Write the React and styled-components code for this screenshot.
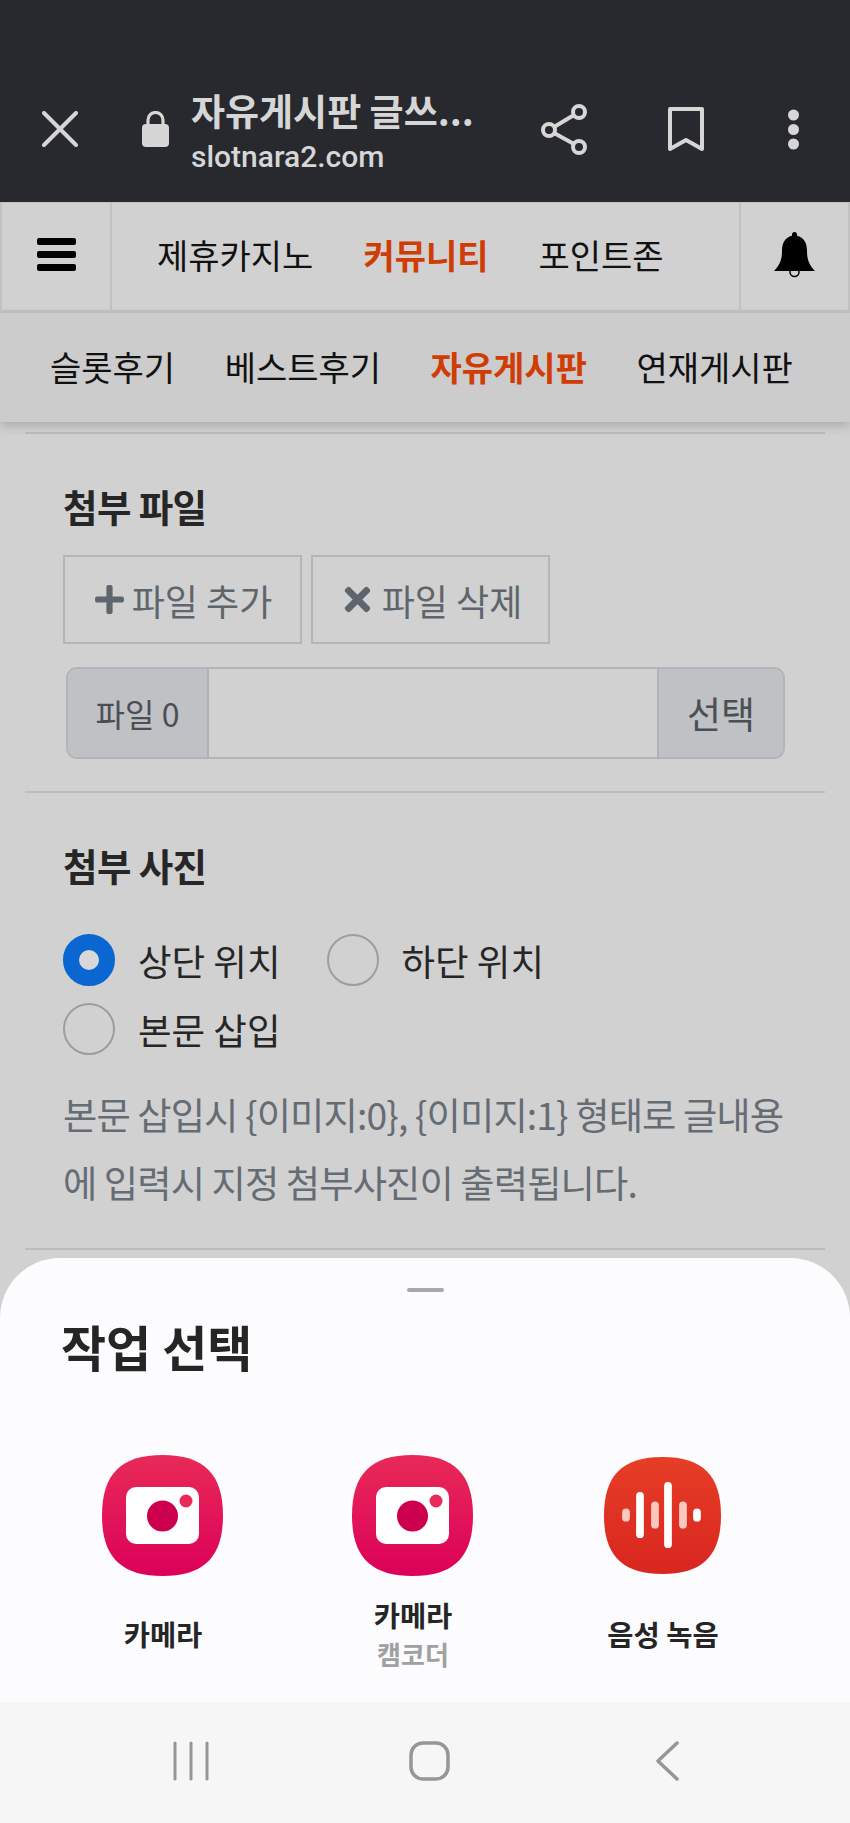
import React from "react"
import styled, { createGlobalStyle } from "styled-components"
import { FaPlus, FaTimes } from "react-icons/fa"

const GlobalStyle = createGlobalStyle`
  html, body {
    margin: 0;
    padding: 0;
    background: #d1d1d1;
    overflow: hidden;
  }
  * { box-sizing: border-box; }
  body {
    font-family: "Noto Sans CJK KR", "Noto Sans", sans-serif;
  }
`

const Screen = styled.div`
  width: 850px;
  height: 1823px;
  display: flex;
  flex-direction: column;
  overflow: hidden;
`

const TitleBar = styled.header`
  height: 202px;
  flex: none;
  background: #27292e;
  color: #d6d6d6;
  display: flex;
  align-items: flex-end;
  padding: 0 0 30px 42px;
`

const BarIcon = styled.svg`
  display: block;
  flex: none;
  margin-bottom: ${p => p.$mb || 0}px;
  margin-left: ${p => p.$ml || 0}px;
`

const TitleBlock = styled.div`
  width: 320px;
  margin: 0 0 -3px 22px;
`

const PageTitle = styled.div`
  font-size: 37px;
  font-weight: 700;
  line-height: 44px;
  white-space: nowrap;
`

const Domain = styled.div`
  font-family: Roboto, "Liberation Sans", sans-serif;
  font-weight: 500;
  font-size: 30px;
  line-height: 36px;
  margin-top: 7px;
`

const MainNav = styled.nav`
  height: 111px;
  flex: none;
  background: #d1d1d1;
  border: 2px solid #c2c2c2;
  border-bottom-width: 3px;
  border-top-width: 1px;
  display: flex;
`

const NavCell = styled.div`
  width: ${p => p.$w}px;
  flex: none;
  display: flex;
  align-items: center;
  justify-content: center;
  padding-bottom: 4px;
  border-left: ${p => (p.$divider === "left" ? "2px solid #c2c2c2" : "0")};
  border-right: ${p => (p.$divider === "right" ? "2px solid #c2c2c2" : "0")};
`

const NavItems = styled.div`
  flex: 1;
  display: flex;
  align-items: center;
  gap: ${p => p.$gap}px;
  padding-left: ${p => p.$left}px;
  padding-bottom: ${p => p.$bottom || 0}px;
`

const NavItem = styled.a`
  font-size: 34px;
  line-height: 44px;
  white-space: nowrap;
  color: ${p => (p.$active ? "#d03c05" : "#111")};
  font-weight: ${p => (p.$active ? 700 : 400)};
`

const SubNav = styled.nav`
  height: 109px;
  flex: none;
  display: flex;
  background: #cccccc;
  box-shadow: 0 4px 10px rgba(0, 0, 0, 0.18);
  position: relative;
  z-index: 1;
`

const Content = styled.main`
  flex: 1;
  min-height: 0;
  padding: 10px 25px 0;
  background: #d1d1d1;
`

const Section = styled.section`
  border-top: 2px solid #bcbcbc;
  padding: 0 38px 32px;
`

const Heading = styled.h3`
  margin: 52px 0 0;
  font-size: 37.5px;
  line-height: 40px;
  font-weight: 700;
  letter-spacing: -0.6px;
  color: #262626;
`

const ButtonRow = styled.div`
  display: flex;
  gap: 9px;
  margin-top: 29px;
`

const FileButton = styled.button`
  width: 239px;
  height: 89px;
  padding: 0;
  background: transparent;
  border: 2.5px solid #b6b6b6;
  border-radius: 0;
  color: #5f656c;
  font: inherit;
  font-size: 36px;
  display: flex;
  align-items: center;
  justify-content: center;
  gap: 6px;
`

const PlusIcon = styled(FaPlus)`
  font-size: 33px;
`

const CrossIcon = styled(FaTimes)`
  font-size: 37px;
`

const FileGroup = styled.div`
  margin: 23px 0 0 3px;
  width: 719px;
  height: 92px;
  display: flex;
  border: 2.5px solid #b1b4b8;
  border-radius: 11px;
  overflow: hidden;
`

const GroupAddon = styled.div`
  width: ${p => p.$w}px;
  flex: none;
  background: #bfc1c4;
  display: flex;
  align-items: center;
  justify-content: center;
  color: #4a4f55;
  font-size: ${p => p.$size}px;
  border-left: ${p => (p.$side === "right" ? "2px solid #aeb1b5" : "0")};
  border-right: ${p => (p.$side === "left" ? "2px solid #aeb1b5" : "0")};
`

const GroupInput = styled.div`
  flex: 1;
  background: #d1d1d1;
`

const RadioGroup = styled.div`
  display: flex;
  flex-wrap: wrap;
  max-width: 600px;
  gap: 17px 46px;
  margin-top: 49px;
`

const RadioItem = styled.label`
  display: flex;
  align-items: center;
  gap: 23px;
  height: 52px;
  font-size: 36.5px;
  color: #262626;
`

const RadioDot = styled.span`
  width: 52px;
  height: 52px;
  flex: none;
  border-radius: 50%;
  background: ${p => (p.$checked ? "#d8d8d8" : "transparent")};
  border: ${p => (p.$checked ? "16px solid #0a66d0" : "2px solid #9a9ea4")};
`

const HelpText = styled.p`
  margin: 25px 0 0;
  font-size: 37.3px;
  line-height: 68px;
  letter-spacing: -0.9px;
  color: #666c74;
  white-space: nowrap;
`

const Sheet = styled.div`
  flex: none;
  height: 444px;
  background: #fcfcff;
  border-radius: 60px 60px 0 0;
  display: flex;
  flex-direction: column;
  position: relative;
  z-index: 2;
`

const Handle = styled.div`
  width: 37px;
  height: 4px;
  background: #a8a8a8;
  border-radius: 2px;
  margin: 30px 0 0 407px;
`

const SheetTitle = styled.h2`
  margin: 21px 0 0 61px;
  font-size: 49px;
  line-height: 66px;
  font-weight: 700;
  color: #252525;
`

const AppGrid = styled.div`
  display: grid;
  grid-template-columns: repeat(3, 250px);
  padding-left: 37px;
  margin-top: 76px;
`

const AppCell = styled.div`
  display: flex;
  flex-direction: column;
  align-items: center;
`

const IconSlot = styled.div`
  height: 121px;
  display: flex;
  align-items: center;
`

const LabelArea = styled.div`
  height: 115px;
  display: flex;
  flex-direction: column;
  align-items: center;
  justify-content: center;
  padding-left: 2px;
`

const AppName = styled.div`
  font-size: 28.5px;
  line-height: 39px;
  font-weight: 700;
  color: #252525;
`

const AppSub = styled.div`
  font-size: 26px;
  line-height: 39px;
  font-weight: 700;
  color: #a0a0a0;
`

const BottomBar = styled.div`
  height: 121px;
  flex: none;
  background: #f6f6f6;
  display: grid;
  grid-template-columns: repeat(3, 238px);
  padding-left: 72px;
  align-items: center;
  position: relative;
  z-index: 2;
`

const BottomSlot = styled.div`
  display: flex;
  justify-content: center;
  padding-bottom: 4px;
`

const Squircle = "M60.5 0C102 0 121 19 121 60.5S102 121 60.5 121 0 102 0 60.5 19 0 60.5 0Z"

const CameraIcon = ({ id }) => (
  <svg width="121" height="121" viewBox="0 0 121 121">
    <defs>
      <linearGradient id={id} x1="0" y1="0" x2="0" y2="1">
        <stop offset="0" stopColor="#e82a58" />
        <stop offset="1" stopColor="#dc0059" />
      </linearGradient>
    </defs>
    <path d={Squircle} fill={`url(#${id})`} />
    <rect x="24" y="32" width="73" height="57" rx="10" fill="#fff" />
    <circle cx="60.5" cy="61" r="15.5" fill="#cc004f" />
    <circle cx="84" cy="46" r="6.5" fill="#ea2a5a" />
  </svg>
)

const RecorderIcon = () => {
  const bars = [
    { x: 22, h: 13, c: "#f9c9c0" },
    { x: 36, h: 46, c: "#fff" },
    { x: 51, h: 27, c: "#f9c9c0" },
    { x: 64, h: 66, c: "#fff" },
    { x: 79, h: 27, c: "#f9c9c0" },
    { x: 93, h: 13, c: "#fff" },
  ]
  return (
    <svg width="117" height="117" viewBox="0 0 121 121">
      <defs>
        <linearGradient id="recGrad" x1="0" y1="0" x2="0" y2="1">
          <stop offset="0" stopColor="#e63e26" />
          <stop offset="1" stopColor="#d92620" />
        </linearGradient>
      </defs>
      <path d={Squircle} fill="url(#recGrad)" />
      {bars.map(b => (
        <rect key={b.x} x={b.x * 1.034 - 4} y={60 - b.h * 0.517} width="8" height={b.h * 1.034} rx="4" fill={b.c} />
      ))}
    </svg>
  )
}

const App = () => {
  return (
    <Screen>
      <GlobalStyle />
      <TitleBar>
        <BarIcon $mb={25} width="36" height="36" viewBox="0 0 36 36" fill="none" stroke="#d6d6d6" strokeWidth="4" strokeLinecap="round">
          <path d="M2 2l32 32M34 2L2 34" />
        </BarIcon>
        <BarIcon $ml={64} $mb={25} width="27" height="36" viewBox="0 0 27 36">
          <path d="M6 15V9a7.5 7.5 0 0 1 15 0v6" fill="none" stroke="#d6d6d6" strokeWidth="3.2" />
          <rect x="0" y="13" width="27" height="23" rx="4" fill="#d6d6d6" />
        </BarIcon>
        <TitleBlock>
          <PageTitle>자유게시판 글쓰...</PageTitle>
          <Domain>slotnara2.com</Domain>
        </TitleBlock>
        <BarIcon $ml={30} $mb={17} width="46" height="51" viewBox="0 0 46 51" fill="none" stroke="#d6d6d6" strokeWidth="4">
          <circle cx="38" cy="8" r="6" />
          <circle cx="8" cy="26" r="6" />
          <circle cx="38" cy="43" r="6" />
          <path d="M13 23l20-12M13 29l20 11" />
        </BarIcon>
        <BarIcon $ml={81} $mb={20} width="36" height="45" viewBox="0 0 36 45" fill="none" stroke="#d6d6d6" strokeWidth="4" strokeLinejoin="round">
          <path d="M2 2h32v40L18 33 2 42z" />
        </BarIcon>
        <BarIcon $ml={83} $mb={22} width="13" height="41" viewBox="0 0 13 41" fill="#d6d6d6">
          <circle cx="6.5" cy="6" r="5.5" />
          <circle cx="6.5" cy="20.5" r="5.5" />
          <circle cx="6.5" cy="35" r="5.5" />
        </BarIcon>
      </TitleBar>

      <MainNav>
        <NavCell $w={110} $divider="right">
          <svg width="39" height="33" viewBox="0 0 39 33" fill="#000">
            <rect width="39" height="7" rx="2" />
            <rect y="13" width="39" height="7" rx="2" />
            <rect y="26" width="39" height="7" rx="2" />
          </svg>
        </NavCell>
        <NavItems $left={45} $gap={50} $bottom={4}>
          <NavItem>제휴카지노</NavItem>
          <NavItem $active>커뮤니티</NavItem>
          <NavItem>포인트존</NavItem>
        </NavItems>
        <NavCell $w={109} $divider="left">
          <svg width="41" height="46" viewBox="0 0 41 46">
            <path d="M20.5 0c1.6 0 2.5 1 2.5 2.6v1.2C30 5.5 33 11 33 19c0 8 2 14 8 20H0c6-6 8-12 8-20 0-8 3-13.500 10-15.200V2.600C18 1 19 0 20.500 0Z" fill="#000" />
            <circle cx="20.500" cy="40" r="4.500" fill="none" stroke="#000" strokeWidth="1.500" />
          </svg>
        </NavCell>
      </MainNav>

      <SubNav>
        <NavItems $left={50} $gap={49.5} $bottom={2}>
          <NavItem>슬롯후기</NavItem>
          <NavItem>베스트후기</NavItem>
          <NavItem $active>자유게시판</NavItem>
          <NavItem>연재게시판</NavItem>
        </NavItems>
      </SubNav>

      <Content>
        <Section>
          <Heading>첨부 파일</Heading>
          <ButtonRow>
            <FileButton><PlusIcon />파일 추가</FileButton>
            <FileButton><CrossIcon />파일 삭제</FileButton>
          </ButtonRow>
          <FileGroup>
            <GroupAddon $w={141} $size={32} $side="left">파일 0</GroupAddon>
            <GroupInput />
            <GroupAddon $w={126} $size={37} $side="right">선택</GroupAddon>
          </FileGroup>
        </Section>
        <Section>
          <Heading>첨부 사진</Heading>
          <RadioGroup>
            <RadioItem><RadioDot $checked />상단 위치</RadioItem>
            <RadioItem><RadioDot />하단 위치</RadioItem>
            <RadioItem><RadioDot />본문 삽입</RadioItem>
          </RadioGroup>
          <HelpText>
            본문 삽입시 {"{이미지:0}"}, {"{이미지:1}"} 형태로 글내용<br />
            에 입력시 지정 첨부사진이 출력됩니다.
          </HelpText>
        </Section>
        <Section />
      </Content>

      <Sheet>
        <Handle />
        <SheetTitle>작업 선택</SheetTitle>
        <AppGrid>
          <AppCell>
            <IconSlot><CameraIcon id="camA" /></IconSlot>
            <LabelArea><AppName>카메라</AppName></LabelArea>
          </AppCell>
          <AppCell>
            <IconSlot><CameraIcon id="camB" /></IconSlot>
            <LabelArea>
              <AppName>카메라</AppName>
              <AppSub>캠코더</AppSub>
            </LabelArea>
          </AppCell>
          <AppCell>
            <IconSlot><RecorderIcon /></IconSlot>
            <LabelArea><AppName>음성 녹음</AppName></LabelArea>
          </AppCell>
        </AppGrid>
      </Sheet>

      <BottomBar>
        <BottomSlot>
          <svg width="38" height="40" viewBox="0 0 38 40" stroke="#969696" strokeWidth="3" strokeLinecap="round">
            <path d="M3 2v36M19 2v36M35 2v36" />
          </svg>
        </BottomSlot>
        <BottomSlot>
          <svg width="41" height="40" viewBox="0 0 41 40" fill="none" stroke="#969696" strokeWidth="3.500">
            <rect x="2" y="2" width="37" height="36" rx="12" />
          </svg>
        </BottomSlot>
        <BottomSlot>
          <svg width="24" height="40" viewBox="0 0 24 40" fill="none" stroke="#969696" strokeWidth="3.500" strokeLinecap="round" strokeLinejoin="round">
            <path d="M22 2L3 20l19 18" />
          </svg>
        </BottomSlot>
      </BottomBar>
    </Screen>
  )
}

export default App
